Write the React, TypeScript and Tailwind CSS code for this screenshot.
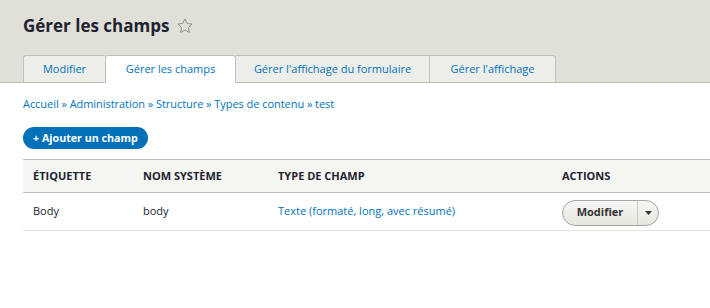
import React from "react";

const Star = () => (
  <svg width="18" height="18" viewBox="0 0 24 24" className="ml-[7px] mt-[2px]">
    <path
      d="M12 2.5l2.9 6.1 6.6.8-4.9 4.6 1.3 6.6L12 17.3l-5.9 3.3 1.3-6.6-4.9-4.6 6.6-.8z"
      fill="none"
      stroke="#8e8e88"
      strokeWidth="1.3"
      strokeLinejoin="round"
    />
  </svg>
);

export default function App() {
  const font = { fontFamily: '"Open Sans", "DejaVu Sans", sans-serif' };
  return (
    <div className="w-[710px] h-[308px] bg-white overflow-hidden" style={font}>
      <div className="bg-[#e0e0d8] border-b border-[#bfbfba] pt-[13px] px-[23px]">
        <div className="flex items-center h-[24px]">
          <h1 className="text-[17px] font-bold text-[#222330] leading-none">Gérer les champs</h1>
          <Star />
        </div>
        <div className="flex mt-[18px] text-[11px] -mb-px">
          <div className="w-[82px] h-[28px] flex items-center justify-center bg-[#ededea] border border-[#bfbfba] border-r-0 rounded-tl-[3px] text-[#0074bd]">Modifier</div>
          <div className="w-[131px] h-[28px] flex items-center justify-center bg-white border border-[#bfbfba] border-b-white rounded-t-[3px] text-[#0074bd]">Gérer les champs</div>
          <div className="w-[194px] h-[28px] flex items-center justify-center bg-[#ededea] border border-[#bfbfba] border-l-0 text-[#0074bd]">Gérer l'affichage du formulaire</div>
          <div className="w-[126px] h-[28px] flex items-center justify-center bg-[#ededea] border border-[#bfbfba] border-l-0 rounded-tr-[3px] text-[#0074bd]">Gérer l'affichage</div>
        </div>
      </div>
      <div className="pl-[23px]">
        <div className="pt-[14px] text-[11px] tracking-[-0.05px] text-[#0074bd] leading-[14px]">
          Accueil » Administration » Structure » Types de contenu » test
        </div>
        <div className="mt-[16px] flex">
          <span className="flex items-center h-[22px] px-[10px] rounded-full bg-[#0071b8] text-white font-bold text-[10.7px] leading-none">
            + Ajouter un champ
          </span>
        </div>
        <table className="mt-[10px] w-[720px] text-[11px] text-[#222330] border-collapse">
          <thead>
            <tr className="bg-[#f5f5f2] border-t border-b border-[#bfbfba] h-[33px]">
              <th className="text-left font-bold uppercase pl-[10px] w-[120px]">Étiquette</th>
              <th className="text-left font-bold uppercase w-[135px]">Nom système</th>
              <th className="text-left font-bold uppercase w-[284px]">Type de champ</th>
              <th className="text-left font-bold uppercase">Actions</th>
            </tr>
          </thead>
          <tbody>
            <tr className="border-b border-[#e6e4df] h-[38px]">
              <td className="pl-[10px]">Body</td>
              <td>body</td>
              <td className="text-[#0074bd]">Texte (formaté, long, avec résumé)</td>
              <td>
                <div className="flex mt-[2px] h-[26px] w-[97px] rounded-full border border-[#a6a6a6] bg-gradient-to-b from-[#f6f6f3] to-[#e7e7df] overflow-hidden">
                  <span className="flex items-center justify-center font-bold text-[#333] border-r border-[#c8c8c0] w-[75px]">Modifier</span>
                  <span className="flex items-center justify-center flex-1">
                    <svg width="7" height="4" viewBox="0 0 7 4"><path d="M0 0h7L3.5 4z" fill="#333" /></svg>
                  </span>
                </div>
              </td>
            </tr>
          </tbody>
        </table>
      </div>
    </div>
  );
}
